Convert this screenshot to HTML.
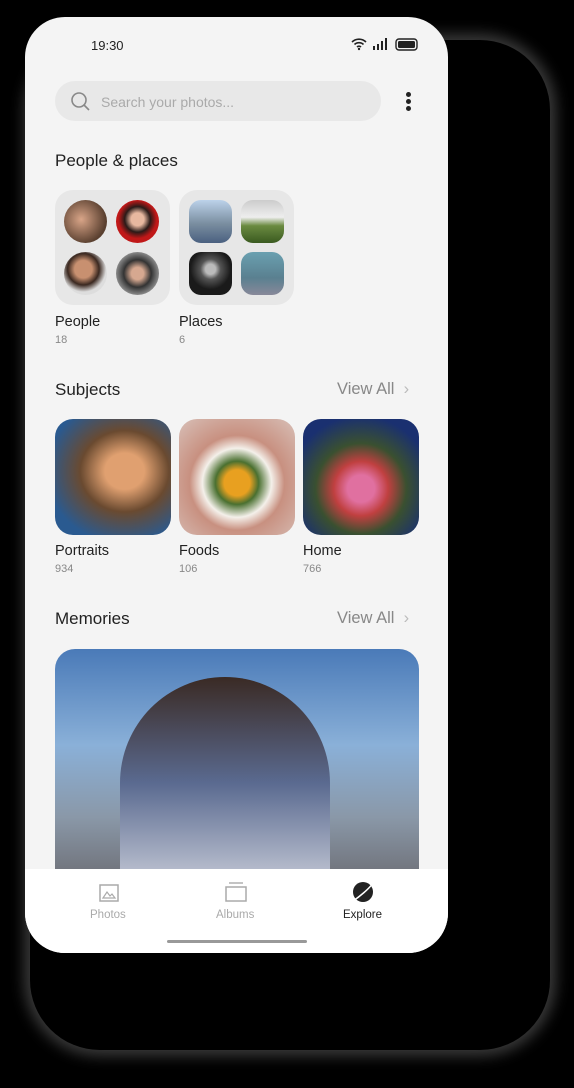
<!DOCTYPE html>
<html><head><meta charset="utf-8"><style>
*{margin:0;padding:0;box-sizing:border-box}
body{width:574px;height:1088px;background:#000;position:relative;overflow:hidden;font-family:"Liberation Sans",sans-serif}
.shadow{position:absolute;left:30px;top:40px;width:520px;height:1010px;border-radius:70px;background:#000;box-shadow:0 0 14px 6px #3a3a3a;}
.phone{position:absolute;left:25px;top:17px;width:423px;height:936px;border-radius:40px;background:#f4f4f4;overflow:hidden}
.t{position:absolute;color:#222}
.search{position:absolute;left:30px;top:64px;width:326px;height:40px;border-radius:20px;background:#e8e8e8}
.card{position:absolute;width:115px;height:115px;border-radius:18px;background:#e7e7e7}
.c{position:absolute;width:43px;height:43px;border-radius:50%}
.s{position:absolute;width:43px;height:43px;border-radius:12px}
.ph{position:absolute;width:116px;height:116px;border-radius:18px;top:402px}
.sub{font-size:11px;color:#888}
.nav{position:absolute;left:0;top:852px;width:423px;height:84px;background:#fff}
</style></head><body>
<div class="shadow"></div>
<div class="phone">
<div class="t" style="left:66px;top:21px;font-size:13px">19:30</div>
<div class="t" style="left:326px;top:20px;font-size:11px;letter-spacing:1px">
<svg width="68" height="14" viewBox="0 0 68 14"><path d="M1 5a10 10 0 0 1 14 0M3.5 7.5a6.5 6.5 0 0 1 9 0M6 10a3 3 0 0 1 4 0" stroke="#222" stroke-width="1.6" fill="none"/><circle cx="8" cy="12" r="1.2" fill="#222"/><rect x="22" y="9" width="2" height="4" fill="#222"/><rect x="26" y="7" width="2" height="6" fill="#222"/><rect x="30" y="4" width="2" height="9" fill="#222"/><rect x="34" y="1" width="2" height="12" fill="#222"/><rect x="45" y="2" width="21" height="11" rx="3" fill="none" stroke="#222" stroke-width="1.4"/><rect x="47" y="4" width="17" height="7" rx="1.5" fill="#222"/></svg></div>
<div class="search"></div>
<svg style="position:absolute;left:45px;top:74px" width="20" height="20"><circle cx="9" cy="9" r="7" stroke="#888" stroke-width="1.6" fill="none"/><path d="M14 14l5 5" stroke="#888" stroke-width="1.6"/></svg>
<div class="t" style="left:76px;top:77px;font-size:14px;color:#aaa">Search your photos...</div>
<div style="position:absolute;left:381px;top:75px;width:5px;height:5px;border-radius:50%;background:#222;box-shadow:0 7px 0 #222,0 14px 0 #222"></div>
<div class="t" style="left:30px;top:134px;font-size:17px">People &amp; places</div>
<div class="card" style="left:30px;top:173px"></div>
<div class="c" style="left:39px;top:183px;background:radial-gradient(circle at 40% 45%,#d9a588,#5a4030 70%)"></div>
<div class="c" style="left:91px;top:183px;background:radial-gradient(circle at 50% 45%,#e8b8a0 20%,#2a1a18 40%,#c01818 60%)"></div>
<div class="c" style="left:39px;top:235px;background:radial-gradient(circle at 45% 40%,#c89070 25%,#3a2820 45%,#ddd 65%)"></div>
<div class="c" style="left:91px;top:235px;background:radial-gradient(circle at 50% 50%,#d6a890 20%,#333 45%,#888 70%)"></div>
<div class="card" style="left:154px;top:173px"></div>
<div class="s" style="left:164px;top:183px;background:linear-gradient(#bcd2ea,#7a8ea0 55%,#4a6080)"></div>
<div class="s" style="left:216px;top:183px;background:linear-gradient(#ccc,#eee 40%,#6a8a40 60%,#3a5a20)"></div>
<div class="s" style="left:164px;top:235px;background:radial-gradient(circle at 50% 40%,#bbb 15%,#555 30%,#1a1a1a 60%)"></div>
<div class="s" style="left:216px;top:235px;background:linear-gradient(#6aa0b0,#5a8090 60%,#889)"></div>
<div class="t" style="left:30px;top:297px;font-size:14.5px">People</div>
<div class="t sub" style="left:30px;top:317px">18</div>
<div class="t" style="left:154px;top:297px;font-size:14.5px">Places</div>
<div class="t sub" style="left:154px;top:317px">6</div>
<div class="t" style="left:30px;top:363px;font-size:17px">Subjects</div>
<div class="t" style="left:312px;top:363px;font-size:16.5px;color:#888">View All &nbsp;<span style="color:#bbb">›</span></div>
<div class="ph" style="left:30px;background:radial-gradient(ellipse at 60% 45%,#e0a070 20%,#6a4a30 45%,#2a5a90 80%)"></div>
<div class="ph" style="left:154px;background:radial-gradient(circle at 50% 55%,#e8a020 15%,#4a7030 25%,#f4f0ea 40%,#c89080 55%,#d8c0b8)"></div>
<div class="ph" style="left:278px;background:radial-gradient(circle at 50% 60%,#e070a0 15%,#c04040 30%,#3a5030 50%,#1a3070 80%)"></div>
<div class="t" style="left:30px;top:526px;font-size:14.5px">Portraits</div>
<div class="t sub" style="left:30px;top:546px">934</div>
<div class="t" style="left:154px;top:526px;font-size:14.5px">Foods</div>
<div class="t sub" style="left:154px;top:546px">106</div>
<div class="t" style="left:278px;top:526px;font-size:14.5px">Home</div>
<div class="t sub" style="left:278px;top:546px">766</div>
<div class="t" style="left:30px;top:592px;font-size:17px">Memories</div>
<div class="t" style="left:312px;top:592px;font-size:16.5px;color:#888">View All &nbsp;<span style="color:#bbb">›</span></div>
<div style="position:absolute;left:30px;top:632px;width:364px;height:240px;border-radius:20px 20px 0 0;background:linear-gradient(#4a7ab8,#8ab0d8 40%,#8a98a8 70%,#6a6a70)"></div>
<div style="position:absolute;left:95px;top:660px;width:210px;height:212px;border-radius:50% 50% 0 0;background:linear-gradient(#3a2a24,#5a6a90 50%,#c8ccd8)"></div>
<div class="nav"></div>
<svg style="position:absolute;left:74px;top:867px" width="20" height="18"><rect x="1" y="1" width="18" height="16" fill="none" stroke="#aaa" stroke-width="1.5"/><path d="M4 14l4-6 3 4 2-2 3 4z" fill="none" stroke="#aaa" stroke-width="1.2"/></svg>
<svg style="position:absolute;left:200px;top:865px" width="22" height="20"><path d="M4 1h14" stroke="#aaa" stroke-width="1.4"/><rect x="1" y="5" width="20" height="14" fill="none" stroke="#aaa" stroke-width="1.5"/></svg>
<svg style="position:absolute;left:326px;top:864px" width="24" height="22"><circle cx="12" cy="11" r="10" fill="#222"/><path d="M2 20C8 16 18 8 22 2" stroke="#fff" stroke-width="1.5" fill="none"/></svg>
<div class="t" style="left:65px;top:892px;font-size:11.5px;color:#aaa">Photos</div>
<div class="t" style="left:191px;top:892px;font-size:11.5px;color:#aaa">Albums</div>
<div class="t" style="left:318px;top:892px;font-size:11.5px;color:#222">Explore</div>
<div style="position:absolute;left:142px;top:923px;width:140px;height:3px;border-radius:2px;background:#999"></div>
</div>
</body></html>
